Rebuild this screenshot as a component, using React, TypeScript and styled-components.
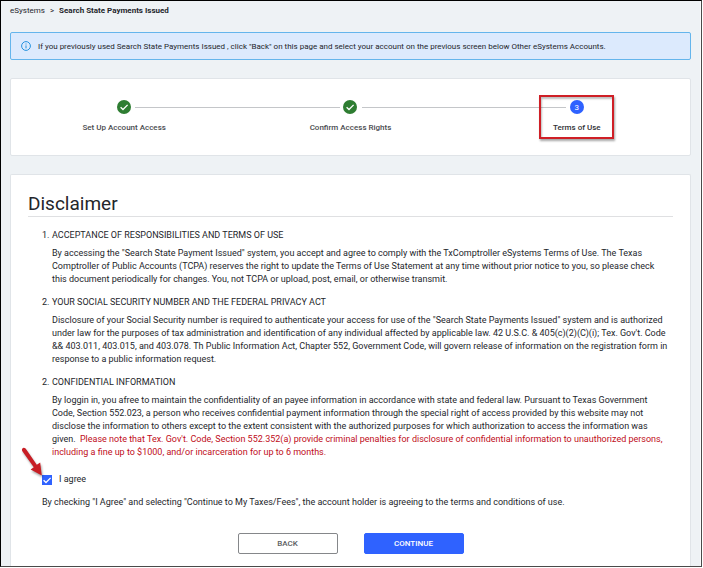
import React, { useId, useState } from 'react';
import styled, { createGlobalStyle } from 'styled-components';

const GlobalStyle = createGlobalStyle`
  *, *::before, *::after { box-sizing: border-box; }
  html, body, #root { height: 100%; }
  body {
    margin: 0;
    background: #fff;
    color: #24262b;
    font-family: Roboto, "Liberation Sans", sans-serif;
    font-size: 9px;
    line-height: 13px;
  }
`;

const Frame = styled.div`
  height: 100%;
  padding: 0 1px 1px 0;
`;

const Page = styled.div`
  min-height: 100%;
  display: flex;
  flex-direction: column;
  padding: 3px 10px 0 9px;
  background: #eef2f5;
  border: 1px solid #000;
  border-right-color: #4a4a4a;
  border-bottom-color: #4a4a4a;
  box-shadow: inset -1px 0 #fafbfc;
`;

const Breadcrumb = styled.nav`
  display: flex;
  gap: 5px;
  font-size: 8px;
`;

const CrumbLink = styled.a`
  color: inherit;
  text-decoration: none;
`;

const CrumbCurrent = styled.span`
  font-weight: 700;
`;

const Notice = styled.div`
  display: flex;
  align-items: center;
  gap: 7px;
  height: 28px;
  margin-top: 15px;
  padding: 0 10px;
  background: #dceafd;
  border: 1px solid #64b5ec;
  border-radius: 2px;
  font-size: 8px;
`;

const Card = styled.section`
  background: #fff;
  border: 1px solid #e0e4e8;
  border-radius: 2px;
`;

const StepsCard = styled(Card)`
  margin-top: 18px;
  padding: 17px 0 15px;
`;

const Steps = styled.ol`
  display: grid;
  grid-template-columns: repeat(3, 1fr);
  margin: 0;
  padding: 0;
  list-style: none;
`;

const StepItem = styled.li<{ $done?: boolean }>`
  position: relative;
  display: flex;
  flex-direction: column;
  align-items: center;
  padding: 4px 0 6px;
  color: ${(p) => (p.$done ? '#4a4c50' : '#2f3135')};
  font-size: 8px;
  font-weight: 500;

  &:not(:first-child)::before {
    content: '';
    position: absolute;
    top: 11px;
    left: calc(-50% + 11px);
    right: calc(50% + 11px);
    height: 1px;
    background: #c4c6c9;
  }
`;

const StepDot = styled.span<{ $done?: boolean }>`
  display: flex;
  align-items: center;
  justify-content: center;
  width: 14px;
  height: 14px;
  margin-bottom: 7px;
  border-radius: 50%;
  background: ${(p) => (p.$done ? '#2e7d32' : '#2f62ff')};
  color: #fff;
  font-weight: 400;
`;

const Highlight = styled.span`
  position: absolute;
  top: -1px;
  left: calc(50% - 38px);
  width: 75px;
  height: 44px;
  border: 2px solid #cf1f26;
  box-shadow: 1px 2px 2px rgba(0, 0, 0, 0.35), inset 1px 2px 2px rgba(0, 0, 0, 0.25);
`;

const Content = styled(Card)`
  flex: 1;
  margin-top: 18px;
  padding: 17px 17px 10px;
  border-bottom: 0;
  border-radius: 2px 2px 0 0;
`;

const Title = styled.h1`
  margin: 0;
  padding-bottom: 1px;
  border-bottom: 1px solid #dfe0e2;
  font-size: 19px;
  font-weight: 400;
  line-height: 23px;
`;

const Body = styled.div`
  padding: 12px 4px 0 14px;
`;

const Clause = styled.section`
  display: grid;
  grid-template-columns: 10px 1fr;
  row-gap: 5px;
  margin-bottom: 10px;
`;

const ClauseTitle = styled.h2`
  margin: 0;
  font-size: 9px;
  font-weight: 400;
`;

const ClauseText = styled.p`
  grid-column: 2;
  margin: 0;
`;

const Warning = styled.span`
  margin-left: 2px;
  color: #c00d20;
`;

const Agree = styled.div`
  position: relative;
  display: flex;
  align-items: center;
  gap: 7px;
  margin-top: 14px;
`;

const CheckWrap = styled.span`
  display: grid;
  width: 10px;
  height: 10px;

  & > * { grid-area: 1 / 1; }
  & > svg { pointer-events: none; }
`;

const CheckBox = styled.input`
  appearance: none;
  width: 10px;
  height: 10px;
  margin: 0;
  border: 1px solid #2f62ff;
  background: #fff;

  &:checked { background: #2f62ff; }
`;

const Pointer = styled.svg`
  position: absolute;
  left: -21px;
  bottom: 9px;
  filter: drop-shadow(1px 2px 1px rgba(0, 0, 0, 0.35));
`;

const Note = styled.p`
  margin: 10px 0 0;
`;

const Actions = styled.div`
  display: flex;
  justify-content: center;
  gap: 26px;
  margin-top: 24px;
`;

const Button = styled.button<{ $primary?: boolean }>`
  width: 100px;
  height: 21px;
  padding: 0;
  border: 1px solid ${(p) => (p.$primary ? '#2f62ff' : '#85878a')};
  border-radius: 2px;
  background: ${(p) => (p.$primary ? '#2f62ff' : '#fff')};
  color: ${(p) => (p.$primary ? '#fff' : '#5c5e62')};
  font: 500 8px/13px Roboto, "Liberation Sans", sans-serif;
`;

const Tick = ({ size }: { size: number }) => (
  <svg width={size} height={size} viewBox="0 0 10 10" fill="none" stroke="#fff" strokeWidth="1.3" aria-hidden="true">
    <path d="M1.6 5.2 4 7.5 8.6 2.9" />
  </svg>
);

const steps = [
  { label: 'Set Up Account Access', done: true },
  { label: 'Confirm Access Rights', done: true },
  { label: 'Terms of Use', done: false },
];

const clauses = [
  {
    no: '1.',
    title: 'ACCEPTANCE OF RESPONSIBILITIES AND TERMS OF USE',
    text: 'By accessing the "Search State Payment Issued" system, you accept and agree to comply with the TxComptroller eSystems Terms of Use. The Texas Comptroller of Public Accounts (TCPA) reserves the right to update the Terms of Use Statement at any time without prior notice to you, so please check this document periodically for changes. You, not TCPA or upload, post, email, or otherwise transmit.',
  },
  {
    no: '2.',
    title: 'YOUR SOCIAL SECURITY NUMBER AND THE FEDERAL PRIVACY ACT',
    text: "Disclosure of your Social Security number is required to authenticate your access for use of the \"Search State Payments Issued\" system and is authorized under law for the purposes of tax administration and identification of any individual affected by applicable law. 42 U.S.C. & 405(c)(2)(C)(i); Tex. Gov't. Code && 403.011, 403.015, and 403.078. Th Public Information Act, Chapter 552, Government Code, will govern release of information on the registration form in response to a public information request.",
  },
  {
    no: '2.',
    title: 'CONFIDENTIAL INFORMATION',
    text: 'By loggin in, you afree to maintain the confidentiality of an payee information in accordance with state and federal law. Pursuant to Texas Government Code, Section 552.023, a person who receives confidential payment information through the special right of access provided by this website may not disclose the information to others except to the extent consistent with the authorized purposes for which authorization to access the information was given. ',
    warning: "Please note that Tex. Gov't. Code, Section 552.352(a) provide criminal penalties for disclosure of confidential information to unauthorized persons, including a fine up to $1000, and/or incarceration for up to 6 months.",
  },
];

export default function App() {
  const [agreed, setAgreed] = useState(true);
  const agreeId = useId();

  return (
    <Frame>
      <GlobalStyle />
      <Page>
        <Breadcrumb aria-label="Breadcrumb">
          <CrumbLink href="#esystems">eSystems</CrumbLink>
          <span>&gt;</span>
          <CrumbCurrent aria-current="page">Search State Payments Issued</CrumbCurrent>
        </Breadcrumb>

        <Notice role="status">
          <svg width="10" height="10" viewBox="0 0 10 10" fill="none" stroke="#2592de" aria-hidden="true">
            <circle cx="5" cy="5" r="4.4" />
            <path d="M5 4.4v3M5 2.5v1" />
          </svg>
          <span>
            If you previously used Search State Payments Issued , click "Back" on this page and select your account on
            the previous screen below Other eSystems Accounts.
          </span>
        </Notice>

        <StepsCard>
          <Steps>
            {steps.map((step, i) => (
              <StepItem key={step.label} $done={step.done} aria-current={step.done ? undefined : 'step'}>
                <StepDot $done={step.done}>{step.done ? <Tick size={10} /> : i + 1}</StepDot>
                <span>{step.label}</span>
                {!step.done && <Highlight />}
              </StepItem>
            ))}
          </Steps>
        </StepsCard>

        <Content>
          <Title>Disclaimer</Title>
          <Body>
            {clauses.map((clause) => (
              <Clause key={clause.title}>
                <span>{clause.no}</span>
                <ClauseTitle>{clause.title}</ClauseTitle>
                <ClauseText>
                  {clause.text}
                  {clause.warning && <Warning>{clause.warning}</Warning>}
                </ClauseText>
              </Clause>
            ))}
            <Agree>
              <CheckWrap>
                <CheckBox
                  id={agreeId}
                  type="checkbox"
                  checked={agreed}
                  onChange={(e) => setAgreed(e.target.checked)}
                />
                {agreed && <Tick size={10} />}
              </CheckWrap>
              <label htmlFor={agreeId}>I agree</label>
              <Pointer width="22" height="30" viewBox="0 0 22 30" aria-hidden="true">
                <path
                  d="M1.2 1.8Q2.4 0 4.6 1.4L15.8 17.8 19.2 15.4 20.8 28.6 9.6 22.4 12.8 20.2 1.2 4Q.6 2.6 1.2 1.8Z"
                  fill="#c81e25"
                />
              </Pointer>
            </Agree>
            <Note>
              By checking "I Agree" and selecting "Continue to My Taxes/Fees", the account holder is agreeing to the
              terms and conditions of use.
            </Note>
          </Body>
          <Actions>
            <Button type="button">BACK</Button>
            <Button type="button" $primary>CONTINUE</Button>
          </Actions>
        </Content>
      </Page>
    </Frame>
  );
}
